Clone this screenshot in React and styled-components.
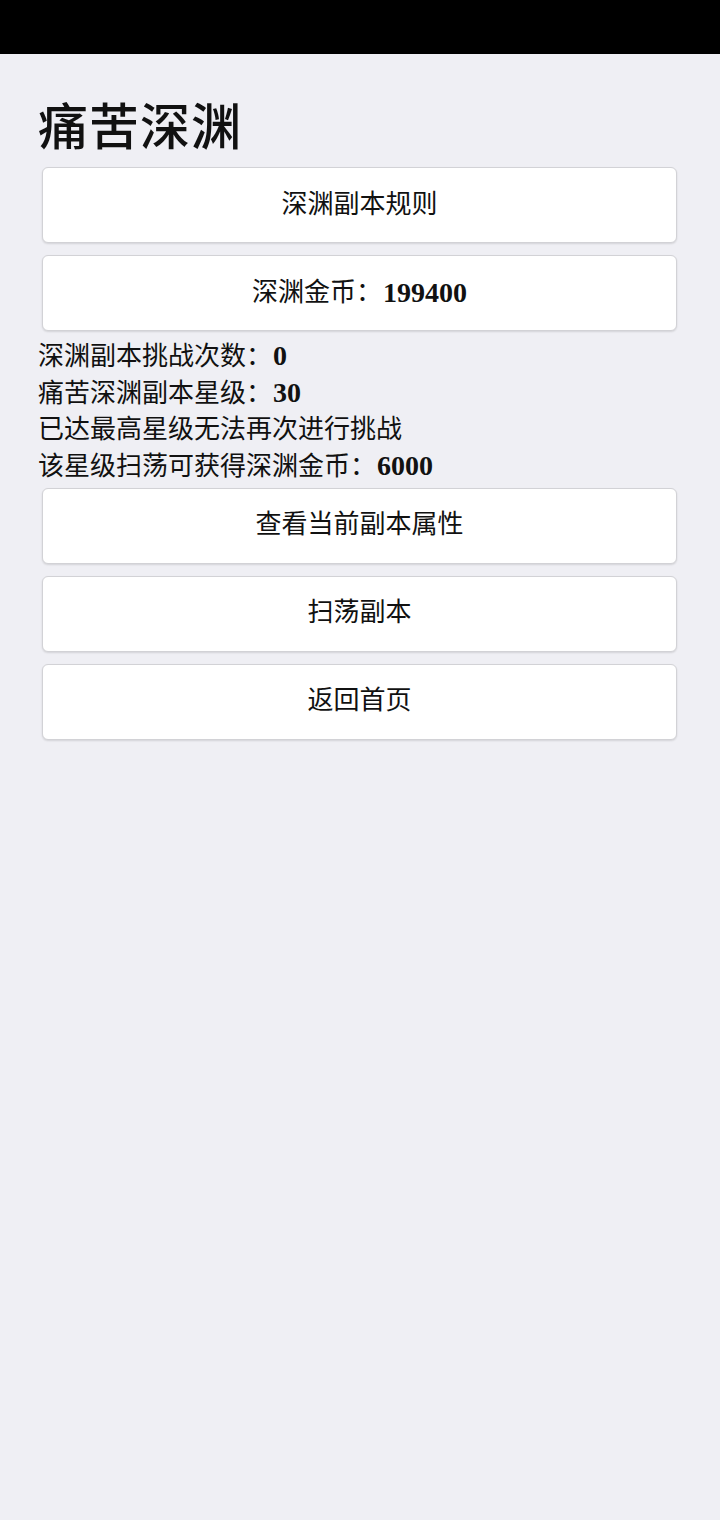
import React from 'react'
import styled, { createGlobalStyle } from 'styled-components'

const GlobalStyle = createGlobalStyle`
  html, body {
    margin: 0;
    padding: 0;
    background: #efeff4;
  }
  body {
    font-family: "Liberation Serif", "Noto Sans CJK SC", serif;
    color: #111;
  }
`

const StatusBar = styled.div`
  height: 54px;
  background: #000;
`

const Page = styled.div`
  padding: 44px 39px 0 38px;
  display: flex;
  flex-direction: column;
`

const Title = styled.h1`
  margin: 0 0 9px;
  font-size: 50px;
  line-height: 60px;
  font-weight: 500;
  letter-spacing: 1px;
`

const ActionButton = styled.button.attrs({
  type: 'button',
})`
  display: flex;
  align-items: center;
  justify-content: center;
  box-sizing: border-box;
  height: 76px;
  margin: 0 4px 12px;
  background: #fff;
  border: 1.5px solid #d2d2d6;
  border-radius: 6px;
  box-shadow: 0 1px 2px rgba(0, 0, 0, 0.12);
  font-family: inherit;
  font-size: 26px;
  line-height: 1;
  color: #111;
  padding: 0 0 1px;
  cursor: pointer;
`

const Info = styled.div`
  margin: -4px 0 2px;
  font-size: 26px;
  line-height: 36.7px;
`

const Line = styled.div`
  white-space: nowrap;
  height: 36.7px;
`

const Num = styled.b`
  font-size: 28px;
  line-height: 1;
  font-weight: 700;
  margin-left: 1px;
`

const App = () => (
  <>
    <GlobalStyle />
    <StatusBar />
    <Page>
      <Title>痛苦深渊</Title>
      <ActionButton>深渊副本规则</ActionButton>
      <ActionButton>
        深渊金币：<Num>199400</Num>
      </ActionButton>
      <Info>
        <Line>
          深渊副本挑战次数：<Num>0</Num>
        </Line>
        <Line>
          痛苦深渊副本星级：<Num>30</Num>
        </Line>
        <Line>已达最高星级无法再次进行挑战</Line>
        <Line>
          该星级扫荡可获得深渊金币：<Num>6000</Num>
        </Line>
      </Info>
      <ActionButton>查看当前副本属性</ActionButton>
      <ActionButton>扫荡副本</ActionButton>
      <ActionButton>返回首页</ActionButton>
    </Page>
  </>
)

export default App
